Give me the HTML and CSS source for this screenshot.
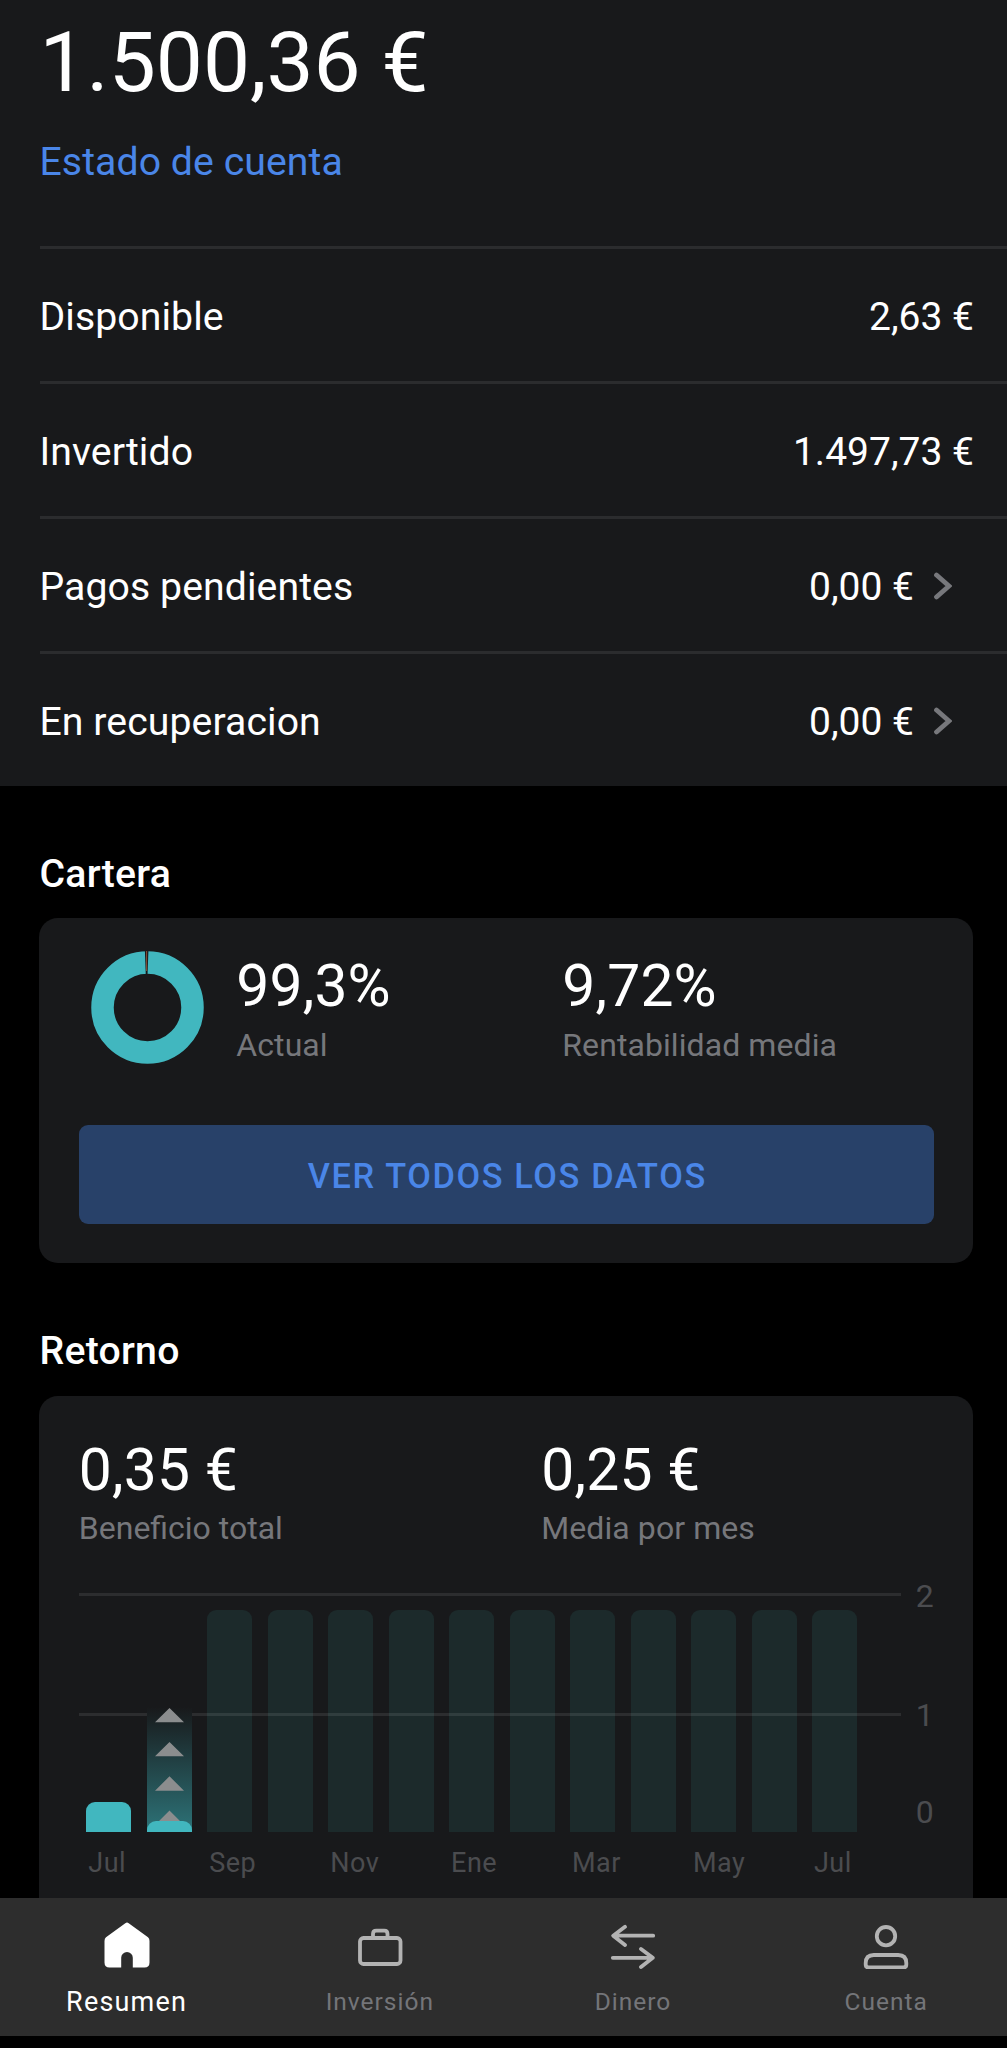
FILE: index.html
```html
<!DOCTYPE html>
<html lang="es">
<head>
<meta charset="utf-8">
<meta name="viewport" content="width=device-width, initial-scale=1">
<title>Resumen</title>
<link rel="stylesheet" href="styles.css">
</head>
<body>
<main class="content">
  <section class="summary">
    <div class="balance">1.500,36 €</div>
    <a class="statement">Estado de cuenta</a>
    <div class="rows">
      <div class="row"><span>Disponible</span><span class="amount">2,63 €</span></div>
      <div class="row"><span>Invertido</span><span class="amount">1.497,73 €</span></div>
      <div class="row row-link"><span>Pagos pendientes</span><span class="amount">0,00 €</span>
        <svg class="chevron" viewBox="0 0 18 30"><path d="M2.5 4 15 15 2.5 26"/></svg></div>
      <div class="row row-link"><span>En recuperacion</span><span class="amount">0,00 €</span>
        <svg class="chevron" viewBox="0 0 18 30"><path d="M2.5 4 15 15 2.5 26"/></svg></div>
    </div>
  </section>

  <h2 class="title">Cartera</h2>
  <section class="card portfolio">
    <div class="portfolio-stats">
      <svg class="donut" viewBox="0 0 113 113">
        <circle cx="56.5" cy="56.5" r="45" fill="none" stroke="#41b7bf" stroke-width="22.5"/>
        <path d="M53.9 0h3.5l-.9 24h-1.7z" fill="#18191b"/>
        <path d="M55.6 0v20" stroke="#8a4f35" stroke-width="1"/>
      </svg>
      <div class="stat"><div class="value">99,3%</div><div class="label">Actual</div></div>
      <div class="stat"><div class="value">9,72%</div><div class="label">Rentabilidad media</div></div>
    </div>
    <button class="button">VER TODOS LOS DATOS</button>
  </section>

  <h2 class="title">Retorno</h2>
  <section class="card returns">
    <div class="return-stats">
      <div class="stat"><div class="value">0,35 €</div><div class="label label-tight">Beneficio total</div></div>
      <div class="stat"><div class="value">0,25 €</div><div class="label">Media por mes</div></div>
    </div>
    <div class="chart">
      <div class="plot">
        <div class="bar earned"></div>
        <div class="bar progress">
          <svg class="arrows" viewBox="0 0 45 125">
            <path d="M22.5 1 37 15.2H8zM22.5 35 37 49.2H8zM22.5 69.3 37 83.8H8zM22.5 103.6 37 118H8z"/>
          </svg>
          <div class="progress-fill"></div>
        </div>
        <div class="bar"></div><div class="bar"></div><div class="bar"></div><div class="bar"></div>
        <div class="bar"></div><div class="bar"></div><div class="bar"></div><div class="bar"></div>
        <div class="bar"></div><div class="bar"></div><div class="bar"></div>
        <div class="line line-top"></div>
        <div class="line line-mid"></div>
      </div>
      <div class="axis"><span>2</span><span>1</span><span>0</span></div>
      <div class="months">
        <span>Jul</span><span>Sep</span><span>Nov</span><span>Ene</span><span>Mar</span><span>May</span><span>Jul</span>
      </div>
    </div>
  </section>
</main>

<nav class="tabs">
  <a class="tab active">
    <svg viewBox="0 0 48 48"><path d="M22.3 2.2Q24 .8 25.7 2.2L45 16.3Q46.5 17.5 46.5 20V41.500Q46.500 46.500 41.500 46.500H29.800V36.800A5.800 5.800 0 0 0 18.200 36.800V46.500H6.500Q1.500 46.500 1.500 41.500V20Q1.500 17.500 3 16.300Z" fill="#fff"/></svg>
    <span>Resumen</span>
  </a>
  <a class="tab">
    <svg viewBox="0 0 48 48"><rect x="4" y="17" width="40.500" height="26" rx="3.500"/><path d="M17 16.500V13Q17 9.700 20.300 9.700H28.200Q31.500 9.700 31.500 13V16.500"/></svg>
    <span>Inversión</span>
  </a>
  <a class="tab">
    <svg viewBox="0 0 48 48"><path d="M44.200 14.700H4.500M16 5.800 4.200 14.700 16 24M3.800 36.800H43.500M32 28 43.800 36.800 32 46"/></svg>
    <span>Dinero</span>
  </a>
  <a class="tab">
    <svg viewBox="0 0 48 48"><circle cx="24" cy="15.200" r="9.200"/><path d="M11.800 34H36.200Q44.300 34 44.300 42.100V43.500Q44.300 46.500 41.300 46.500H6.700Q3.700 46.500 3.700 43.500V42.100Q3.700 34 11.800 34Z"/></svg>
    <span>Cuenta</span>
  </a>
</nav>
</body>
</html>
```
FILE: styles.css
```css
* { box-sizing: border-box; }

body {
  margin: 0;
  width: 1007px;
  height: 2048px;
  overflow: hidden;
  background: #000;
  color: #fff;
  font-family: Roboto, sans-serif;
}

.content {
  height: 1898px;
  overflow: hidden;
}

/* Account summary */
.summary {
  height: 786px;
  padding: 12px 0 0 39.5px;
  background: #18191b;
  display: flex;
  flex-direction: column;
}
.balance {
  font-size: 83.8px;
  line-height: 100px;
}
.statement {
  margin-top: 27px;
  font-size: 39.2px;
  line-height: 46px;
  letter-spacing: 0.08px;
  color: #4a86e8;
}
.rows { margin-top: 61px; }
.row {
  display: flex;
  align-items: center;
  height: 135px;
  padding: 4px 33px 0 0;
  border-top: 3px solid #2b2c2e;
  font-size: 39.2px;
  line-height: 46px;
  letter-spacing: 0.08px;
}
.row-link { padding-right: 55px; }
.amount {
  margin-left: auto;
  font-size: 39px;
  letter-spacing: 0;
}
.chevron {
  width: 18px;
  height: 30px;
  margin: -3px 0 0 20px;
  fill: none;
  stroke: #77787c;
  stroke-width: 4.800;
  stroke-linecap: round;
}

/* Sections */
.title {
  margin: 65px 0 21.300px 39.5px;
  font-size: 39.200px;
  font-weight: 500;
  line-height: 46px;
  letter-spacing: 0.250px;
}
.card {
  width: 934px;
  margin-left: 39.300px;
  border-radius: 19px;
  background: #18191b;
}
.value {
  font-size: 58.800px;
  line-height: 68px;
  letter-spacing: 0.150px;
}
.label {
  margin-top: 6px;
  font-size: 32px;
  line-height: 38px;
  letter-spacing: 0.080px;
  color: #76777b;
}
.label-tight { letter-spacing: 0; }

.portfolio {
  height: 344.700px;
  padding: 33px 39.500px 0;
}
.portfolio-stats {
  display: grid;
  grid-template-columns: 113px 326px 1fr;
  padding-left: 12px;
  height: 174px;
}
.donut { width: 113px; height: 113px; }
.portfolio-stats .stat { margin: 1px 0 0 32.500px; }
.button {
  display: block;
  width: 855px;
  height: 98.500px;
  padding: 2px 0 0 2px;
  border: 0;
  border-radius: 9px;
  background: #284169;
  color: #4a86e8;
  font: 500 34.300px/96px Roboto, sans-serif;
  letter-spacing: 1.630px;
}

/* Returns chart */
.returns {
  height: 560px;
  margin-top: 22px;
  padding: 40.500px 39.500px 0;
}
.return-stats {
  display: grid;
  grid-template-columns: 462.500px 1fr;
}
.return-stats .label { margin-top: 5px; }
.chart {
  display: grid;
  grid-template-columns: 822px 1fr;
  grid-template-rows: 239px auto;
  margin-top: 46px;
}
.plot {
  position: relative;
  display: flex;
  align-items: flex-end;
  justify-content: space-between;
  padding: 0 43.500px 0 7.500px;
}
.bar {
  width: 45px;
  height: 222px;
  border-radius: 9px 9px 0 0;
  background: #1c2a2b;
}
.bar.earned { height: 30px; background: #41b7bf; }
.bar.progress {
  position: relative;
  z-index: 1;
  height: 125px;
  border-radius: 0;
  background: linear-gradient(to top, #2d7378, #18191b);
}
.arrows {
  display: block;
  width: 45px;
  height: 125px;
  fill: #8b8d8e;
}
.progress-fill {
  position: absolute;
  left: 0;
  bottom: 0;
  width: 45px;
  height: 11px;
  border-radius: 9px 9px 0 0;
  background: #41b7bf;
}
.line {
  position: absolute;
  left: 0;
  width: 822px;
  height: 3px;
  background: rgba(255, 255, 255, 0.09);
}
.line-top { top: 0; }
.line-mid { top: 119.500px; }
.axis {
  display: flex;
  flex-direction: column;
  padding-left: 15px;
  font-size: 32px;
  line-height: 38px;
  color: #4b4c4f;
}
.axis span:nth-child(1) { margin-top: -16px; }
.axis span:nth-child(2) { margin-top: 81px; }
.axis span:nth-child(3) { margin-top: 59px; }
.months {
  display: grid;
  grid-template-columns: repeat(7, 120.950px);
  padding: 14.500px 0 0 9.500px;
  font-size: 27px;
  line-height: 32px;
  letter-spacing: 0.500px;
  color: #4b4c4f;
}

/* Bottom navigation */
.tabs {
  display: grid;
  grid-template-columns: repeat(4, 253.200px);
  height: 138px;
  background: #2d2d2d;
}
.tab {
  display: flex;
  flex-direction: column;
  align-items: center;
  padding-top: 23px;
  color: #747579;
  font-size: 24.500px;
  line-height: 32px;
  letter-spacing: 1px;
}
.tab svg {
  width: 48px;
  height: 48px;
  margin-bottom: 17px;
  fill: none;
  stroke: #b3b3b3;
  stroke-width: 3.800;
  stroke-linecap: round;
  stroke-linejoin: round;
}
.tab.active { color: #fff; font-size: 27px; letter-spacing: 1.200px; }
.tab.active svg { stroke: none; }
```
